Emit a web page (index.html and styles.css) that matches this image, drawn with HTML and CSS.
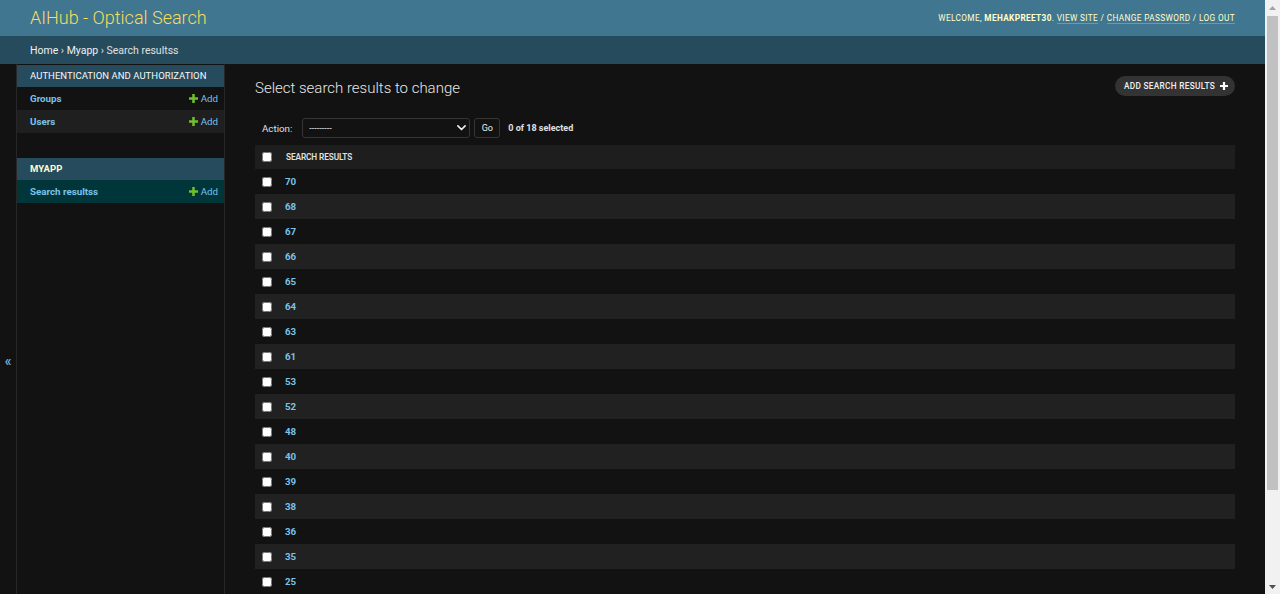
FILE: index.html
```html
<!DOCTYPE html>
<html lang="en">
<head>
<meta charset="utf-8">
<title>Select search results to change | AIHub - Optical Search</title>
<link rel="stylesheet" href="styles.css">
</head>
<body>
<div class="page">
<header class="header">
  <div class="branding"><a class="site-name" href="#">AIHub - Optical Search</a></div>
  <div class="user-tools">
    Welcome, <strong>mehakpreet30</strong>.
    <a href="#">View site</a> /
    <a href="#">Change password</a> /
    <a href="#">Log out</a>
  </div>
</header>
<nav class="breadcrumbs">
  <a href="#">Home</a> › <a href="#">Myapp</a> › Search resultss
</nav>
<div class="main">
  <button class="toggle-nav" type="button" aria-label="Toggle navigation">«</button>
  <aside class="nav-sidebar">
    <table class="module">
      <caption class="caption">Authentication and Authorization</caption>
      <tr class="row">
        <th class="row-name"><a href="#">Groups</a></th>
        <td class="row-add"><a class="addlink" href="#"><svg class="plus-green" viewBox="0 0 10 10"><path d="M3.6 0h2.8v3.6H10v2.8H6.4V10H3.6V6.4H0V3.6h3.6z"/></svg>Add</a></td>
      </tr>
      <tr class="row row-alt">
        <th class="row-name"><a href="#">Users</a></th>
        <td class="row-add"><a class="addlink" href="#"><svg class="plus-green" viewBox="0 0 10 10"><path d="M3.6 0h2.8v3.6H10v2.8H6.4V10H3.6V6.4H0V3.6h3.6z"/></svg>Add</a></td>
      </tr>
    </table>
    <table class="module current-app">
      <caption class="caption caption-current">Myapp</caption>
      <tr class="row row-current">
        <th class="row-name"><a href="#">Search resultss</a></th>
        <td class="row-add"><a class="addlink" href="#"><svg class="plus-green" viewBox="0 0 10 10"><path d="M3.6 0h2.8v3.6H10v2.8H6.4V10H3.6V6.4H0V3.6h3.6z"/></svg>Add</a></td>
      </tr>
    </table>
  </aside>
  <main class="content">
    <div class="content-head">
      <h1 class="title">Select search results to change</h1>
      <a class="object-tool" href="#">Add search results<svg class="plus-white" viewBox="0 0 10 10"><path d="M3.6 0h2.8v3.6H10v2.8H6.4V10H3.6V6.4H0V3.6h3.6z"/></svg></a>
    </div>
    <div class="actions">
      <label class="action-label">Action:</label>
      <div class="select-wrap">
        <select class="action-select">
          <option>---------</option>
          <option>Delete selected search resultss</option>
        </select>
        <svg class="chevron" viewBox="0 0 12 8"><path d="M1.2 1.2 6 6l4.8-4.8" fill="none" stroke="#eeeeee" stroke-width="2.2" stroke-linecap="round" stroke-linejoin="round"/></svg>
      </div>
      <button class="go-button" type="button">Go</button>
      <span class="action-counter">0 of 18 selected</span>
    </div>
    <table class="result-list">
      <thead>
        <tr class="head-row">
          <th class="cell-check"><input class="check" type="checkbox"></th>
          <th class="cell-name">Search results</th>
        </tr>
      </thead>
      <tbody>
        <tr class="result-row"><td class="cell-check"><input class="check" type="checkbox"></td><th class="cell-name"><a href="#">70</a></th></tr>
        <tr class="result-row"><td class="cell-check"><input class="check" type="checkbox"></td><th class="cell-name"><a href="#">68</a></th></tr>
        <tr class="result-row"><td class="cell-check"><input class="check" type="checkbox"></td><th class="cell-name"><a href="#">67</a></th></tr>
        <tr class="result-row"><td class="cell-check"><input class="check" type="checkbox"></td><th class="cell-name"><a href="#">66</a></th></tr>
        <tr class="result-row"><td class="cell-check"><input class="check" type="checkbox"></td><th class="cell-name"><a href="#">65</a></th></tr>
        <tr class="result-row"><td class="cell-check"><input class="check" type="checkbox"></td><th class="cell-name"><a href="#">64</a></th></tr>
        <tr class="result-row"><td class="cell-check"><input class="check" type="checkbox"></td><th class="cell-name"><a href="#">63</a></th></tr>
        <tr class="result-row"><td class="cell-check"><input class="check" type="checkbox"></td><th class="cell-name"><a href="#">61</a></th></tr>
        <tr class="result-row"><td class="cell-check"><input class="check" type="checkbox"></td><th class="cell-name"><a href="#">53</a></th></tr>
        <tr class="result-row"><td class="cell-check"><input class="check" type="checkbox"></td><th class="cell-name"><a href="#">52</a></th></tr>
        <tr class="result-row"><td class="cell-check"><input class="check" type="checkbox"></td><th class="cell-name"><a href="#">48</a></th></tr>
        <tr class="result-row"><td class="cell-check"><input class="check" type="checkbox"></td><th class="cell-name"><a href="#">40</a></th></tr>
        <tr class="result-row"><td class="cell-check"><input class="check" type="checkbox"></td><th class="cell-name"><a href="#">39</a></th></tr>
        <tr class="result-row"><td class="cell-check"><input class="check" type="checkbox"></td><th class="cell-name"><a href="#">38</a></th></tr>
        <tr class="result-row"><td class="cell-check"><input class="check" type="checkbox"></td><th class="cell-name"><a href="#">36</a></th></tr>
        <tr class="result-row"><td class="cell-check"><input class="check" type="checkbox"></td><th class="cell-name"><a href="#">35</a></th></tr>
        <tr class="result-row"><td class="cell-check"><input class="check" type="checkbox"></td><th class="cell-name"><a href="#">25</a></th></tr>
        <tr class="result-row"><td class="cell-check"><input class="check" type="checkbox"></td><th class="cell-name"><a href="#">24</a></th></tr>
      </tbody>
    </table>
    <p class="paginator">18 search resultss</p>
  </main>
</div>
</div>
<div class="scrollbar" aria-hidden="true">
  <div class="sb-button"><svg class="sb-arrow" viewBox="0 0 7 4"><path d="M0 4 3.5 0 7 4z" fill="#a3a3a3"/></svg></div>
  <div class="sb-track"><div class="sb-thumb"></div></div>
  <div class="sb-button"><svg class="sb-arrow" viewBox="0 0 7 4"><path d="M0 0 3.5 4 7 0z" fill="#505050"/></svg></div>
</div>
</body>
</html>
```
FILE: styles.css
```css
html, body {
  margin: 0;
  padding: 0;
}
html {
  background: #121212;
}
body {
  background: #121212;
  color: #eeeeee;
  font-family: Roboto, "Liberation Sans", Arial, sans-serif;
  font-size: 10.5px;
}
a {
  text-decoration: none;
}
.page {
  margin-right: 15px;
}

/* Browser scrollbar drawn over the right edge */
.scrollbar {
  position: fixed;
  top: 0;
  right: 0;
  width: 15px;
  height: 100vh;
  background: #f1f1f1;
  display: flex;
  flex-direction: column;
}
.sb-button {
  flex: 0 0 15px;
  display: flex;
  align-items: center;
  justify-content: center;
}
.sb-arrow {
  width: 7px;
  height: 4px;
}
.sb-track {
  flex: 1;
  padding: 1px 2px 0 2px;
}
.sb-thumb {
  height: 474px;
  background: #c1c1c1;
}

/* Header */
.header {
  display: flex;
  align-items: center;
  justify-content: space-between;
  height: 36px;
  padding: 0 30px;
  background: #417690;
  box-sizing: border-box;
}
.site-name {
  font-size: 18px;
  font-weight: 300;
  color: #f5dd5d;
  line-height: 20px;
}
.user-tools {
  font-size: 8.25px;
  letter-spacing: 0.36px;
  text-transform: uppercase;
  color: #ffffcc;
}
.user-tools strong {
  font-weight: 700;
}
.user-tools a {
  color: #ffffcc;
  border-bottom: 1px solid rgba(255, 255, 255, 0.25);
}

/* Breadcrumbs */
.breadcrumbs {
  height: 28px;
  line-height: 29px;
  padding: 0 30px;
  background: #264b5d;
  color: #e0e0e0;
  font-size: 10.5px;
  box-sizing: border-box;
}
.breadcrumbs a {
  color: #f0f0f0;
}

/* Main */
.main {
  display: flex;
  align-items: stretch;
}
.toggle-nav {
  position: sticky;
  top: 0;
  align-self: flex-start;
  flex: 0 0 17px;
  width: 17px;
  height: 100vh;
  padding: 0 0 1px 0;
  border: 0;
  border-right: 1px solid #272727;
  background: #121212;
  color: #79c3ec;
  font-size: 15px;
  font-family: Roboto, sans-serif;
  display: flex;
  align-items: center;
  justify-content: center;
  box-sizing: border-box;
}
.nav-sidebar {
  flex: 0 0 207px;
  width: 207px;
  border-top: 1px solid transparent;
  border-right: 1px solid #272727;
  background: #121212;
}
.module {
  width: 100%;
  border-collapse: collapse;
  margin-bottom: 25px;
}
.caption {
  height: 22px;
  padding: 0 13px;
  text-align: left;
  background: #264b5d;
  color: #f7f7f7;
  font-size: 9.5px;
  letter-spacing: 0.05px;
  text-transform: uppercase;
  white-space: nowrap;
  line-height: 22px;
  caption-side: top;
}
.caption-current {
  color: #ffffcc;
  font-weight: 700;
}
.row {
  height: 23px;
  background: #121212;
}
.row-alt {
  background: #1f1f1f;
}
.row-current {
  background: #00363a;
}
.row-name {
  padding: 0 0 0 13px;
  text-align: left;
  font-size: 9.75px;
  font-weight: 700;
}
.row-name a {
  color: #79c3ec;
}
.row-add {
  padding: 0 6px 0 0;
  text-align: right;
  font-size: 9.75px;
}
.addlink {
  color: #79c3ec;
  display: inline-flex;
  align-items: center;
  gap: 3px;
}
.plus-green {
  width: 9px;
  height: 9px;
  fill: #70bf2b;
}

/* Content */
.content {
  flex: 1;
  min-width: 0;
  padding: 15px 30px 40px 30px;
}
.content-head {
  display: flex;
  justify-content: space-between;
  align-items: flex-start;
}
.title {
  margin: 0;
  font-size: 15px;
  font-weight: 300;
  line-height: 18px;
  color: #e8e8e8;
}
.object-tool {
  margin-top: -3px;
  height: 20px;
  display: inline-flex;
  align-items: center;
  gap: 5px;
  padding: 0 7px 0 9px;
  border-radius: 15px;
  background: #333333;
  color: #f0f0f0;
  font-size: 8.25px;
  font-weight: 500;
  letter-spacing: 0.3px;
  text-transform: uppercase;
  box-sizing: border-box;
}
.plus-white {
  width: 8px;
  height: 8px;
  fill: #ffffff;
}

/* Actions */
.actions {
  margin-top: 13px;
  padding: 8px 8px 7px 7px;
  display: flex;
  align-items: center;
  color: #e0e0e0;
}
.action-label {
  font-size: 9.75px;
  margin-right: 10px;
}
.select-wrap {
  position: relative;
  width: 168px;
  height: 20px;
}
.action-select {
  appearance: none;
  -webkit-appearance: none;
  width: 100%;
  height: 20px;
  margin: 0;
  padding: 0 6px;
  background: #121212;
  color: #eeeeee;
  border: 1px solid #353535;
  border-radius: 3px;
  font-family: Roboto, sans-serif;
  font-size: 9px;
  box-sizing: border-box;
}
.chevron {
  position: absolute;
  right: 4px;
  top: 7px;
  width: 9px;
  height: 6px;
  pointer-events: none;
}
.go-button {
  margin-left: 4px;
  height: 20px;
  width: 26px;
  padding: 0;
  background: #121212;
  color: #eeeeee;
  border: 1px solid #353535;
  border-radius: 3px;
  font-family: Roboto, sans-serif;
  font-size: 9px;
  box-sizing: border-box;
}
.action-counter {
  margin-left: 8px;
  font-size: 9px;
  font-weight: 700;
  color: #e0e0e0;
}

/* Result list */
.result-list {
  width: 100%;
  border-collapse: collapse;
}
.head-row {
  height: 24px;
  background: #1e1e1e;
}
.head-row .cell-name {
  font-size: 8.25px;
  font-weight: 600;
  color: #e0e0e0;
  text-transform: uppercase;
  letter-spacing: -0.1px;
  padding-left: 8px;
}
.result-row {
  height: 25px;
  background: #121212;
}
.result-row:nth-child(even) {
  background: #212121;
}
.cell-check {
  width: 16px;
  padding: 0 0 0 7px;
  text-align: left;
  vertical-align: middle;
  line-height: 0;
}
.check {
  width: 10px;
  height: 10px;
  margin: 0;
  vertical-align: middle;
}
.cell-name {
  padding: 0 0 0 7px;
  text-align: left;
  font-size: 9.75px;
  font-weight: 700;
}
.cell-name a {
  color: #79c3ec;
}
.paginator {
  margin: 0;
  padding: 12px 8px;
  color: #e0e0e0;
  font-size: 9.75px;
  border-top: 1px solid #272727;
}
```
